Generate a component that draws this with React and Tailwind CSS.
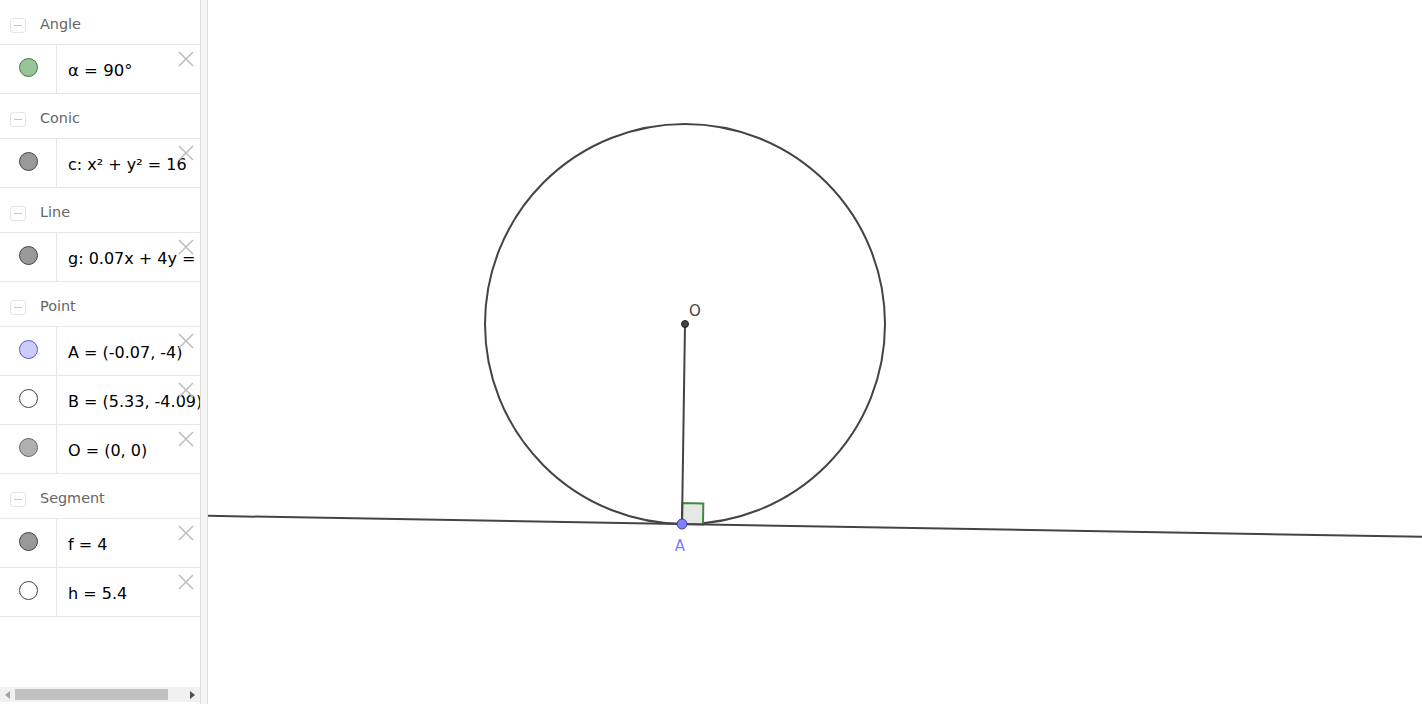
import React from 'react';

const groups = [
  { name: 'Angle', items: [{ text: 'α = 90°', fill: '#99c399', stroke: '#3d7f3d', big: true }] },
  { name: 'Conic', items: [{ text: 'c: x² + y² = 16', fill: '#999999', stroke: '#444444' }] },
  { name: 'Line', items: [{ text: 'g: 0.07x + 4y = -16', fill: '#999999', stroke: '#444444' }] },
  {
    name: 'Point',
    items: [
      { text: 'A = (-0.07, -4)', fill: '#ccccff', stroke: '#5555dd' },
      { text: 'B = (5.33, -4.09)', fill: '#ffffff', stroke: '#444444' },
      { text: 'O = (0, 0)', fill: '#b0b0b0', stroke: '#666666' },
    ],
  },
  {
    name: 'Segment',
    items: [
      { text: 'f = 4', fill: '#999999', stroke: '#444444' },
      { text: 'h = 5.4', fill: '#ffffff', stroke: '#444444' },
    ],
  },
];

function Header({ name }) {
  return (
    <div className="flex h-[45px] shrink-0 items-center border-b border-[#e6e6e6] pt-[6px]">
      <div className="ml-[10px] flex h-[15px] w-[16px] items-center justify-center rounded-[3px] border border-[#e4e4e4]">
        <div className="h-px w-[8px] bg-[#c4c4c4]" />
      </div>
      <span className="ml-[14px] whitespace-nowrap text-[14.4px] text-[#666666]">{name}</span>
    </div>
  );
}

function Item({ item }) {
  return (
    <div className="relative flex h-[49px] shrink-0 border-b border-[#e6e6e6]">
      <div className="flex w-[57px] shrink-0 items-center justify-center border-r border-[#e6e6e6] pb-[4px]">
        <div
          className="h-[19px] w-[19px] rounded-full border"
          style={{ backgroundColor: item.fill, borderColor: item.stroke }}
        />
      </div>
      <div className={`flex items-center whitespace-nowrap pl-[11px] pt-[4px] text-[#000] ${item.big ? 'text-[16.5px]' : 'text-[16px]'}`}>
        {item.text}
      </div>
      <svg className="absolute right-[6px] top-[6px]" width="16" height="16" viewBox="0 0 16 16">
        <path d="M1 1L15 15M15 1L1 15" stroke="#bdbdbd" strokeWidth="1.5" fill="none" />
      </svg>
    </div>
  );
}

export default function App() {
  return (
    <div className="flex h-[704px] w-[1422px] overflow-hidden bg-white font-['DejaVu_Sans',sans-serif]">
      {/* Algebra view */}
      <div className="flex w-[200px] shrink-0 flex-col overflow-hidden">
        <div className="flex flex-1 flex-col overflow-hidden">
          {groups.map((g) => (
            <React.Fragment key={g.name}>
              <Header name={g.name} />
              {g.items.map((it) => (
                <Item key={it.text} item={it} />
              ))}
            </React.Fragment>
          ))}
        </div>
        {/* horizontal scrollbar */}
        <div className="mb-[2px] flex h-[15px] shrink-0 items-center bg-[#f1f1f1]">
          <svg className="ml-[5px]" width="5" height="8" viewBox="0 0 5 8">
            <path d="M5 0L0 4L5 8Z" fill="#a3a3a3" />
          </svg>
          <div className="ml-[5px] h-[11px] w-[153px] bg-[#c1c1c1]" />
          <div className="flex-1" />
          <svg className="mr-[5px]" width="5" height="8" viewBox="0 0 5 8">
            <path d="M0 0L5 4L0 8Z" fill="#505050" />
          </svg>
        </div>
      </div>

      {/* splitter */}
      <div className="w-[8px] shrink-0 border-x border-[#dcdcdc] bg-[#f6f6f6]" />

      {/* Graphics view */}
      <div className="relative flex-1">
        <svg className="block" width="1214" height="704" viewBox="208 0 1214 704">
          <circle cx="685" cy="324" r="200" fill="none" stroke="#444444" strokeWidth="2" />
          <polygon
            points="682,524 682.3,503 703.3,503.4 703,524.4"
            fill="#e6e8e6"
            stroke="#3c8c3c"
            strokeWidth="2"
          />
          <line x1="208" y1="515.8" x2="1422" y2="536.8" stroke="#444444" strokeWidth="2" />
          <line x1="685" y1="324" x2="682" y2="524" stroke="#444444" strokeWidth="2" />
          <circle cx="685" cy="324" r="3.5" fill="#444444" stroke="#222222" strokeWidth="1" />
          <circle cx="682" cy="524" r="5" fill="#7f7fff" stroke="#4040a0" strokeWidth="1" />
          <text x="689" y="316" fontSize="15" fill="#444444" fontFamily="DejaVu Sans, sans-serif">
            O
          </text>
          <text x="680" y="551" fontSize="15" fill="#7f7fff" textAnchor="middle" fontFamily="DejaVu Sans, sans-serif">
            A
          </text>
        </svg>
      </div>
    </div>
  );
}
